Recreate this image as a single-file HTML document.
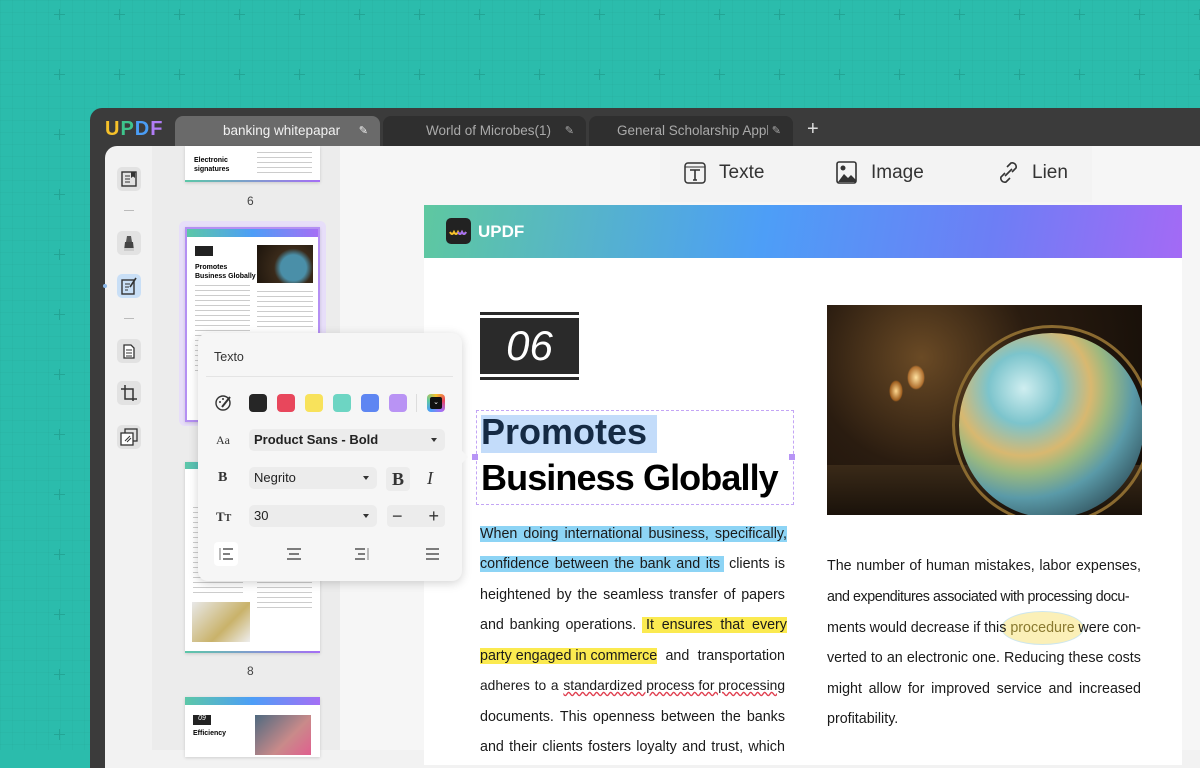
<!DOCTYPE html>
<html><head><meta charset="utf-8"><style>
*{box-sizing:border-box;margin:0;padding:0}
body{width:1200px;height:750px;overflow:hidden;position:relative;font-family:"Liberation Sans",sans-serif;background:#2bbcac}
.grid{position:absolute;inset:0;background-image:linear-gradient(rgba(0,0,0,.025) 1px,transparent 1px),linear-gradient(90deg,rgba(0,0,0,.025) 1px,transparent 1px);background-size:12px 12px}
.plus{position:absolute;width:11px;height:11px}
.plus:before,.plus:after{content:"";position:absolute;background:#23a595}
.plus:before{left:5px;top:0;width:1px;height:11px}
.plus:after{top:5px;left:0;height:1px;width:11px}
.win{position:absolute;left:90px;top:108px;width:1120px;height:660px;background:#3b3b3b;border-radius:12px 0 0 0}
.abs{position:absolute}
.tab{position:absolute;top:8px;height:38px;color:#aaa;font-size:13px;line-height:30px;border-radius:8px 8px 0 0}
.inner{position:absolute;left:15px;top:38px;right:0;bottom:0;background:#f2f2f2;border-radius:12px 0 0 0}
.ic{position:absolute;left:117px;width:24px;height:24px;border-radius:5px;background:#e2e2e2}
.thumb{position:absolute;left:185px;width:135px;background:#fff;box-shadow:0 1px 3px rgba(0,0,0,.15);overflow:hidden}
.line{position:absolute;font-size:14.3px;color:#1a1a1a;white-space:nowrap}
.lj{display:flex;justify-content:space-between}
.hl{background:#8dd4f5}
.hy{background:#fbea50}
.sw{width:18px;height:18px;border-radius:4px;display:inline-block}
.sel{background:#ececec;border-radius:5px;position:absolute;height:22px;font-size:13px;color:#222;line-height:22px;padding-left:5px}
.caret{position:absolute;right:8px;top:9px;border:3.5px solid transparent;border-top:4px solid #333}
.tl{background:repeating-linear-gradient(#ccc 0 1px,transparent 1px 5px)}
</style></head><body>
<div class="grid"></div>
<div class="plus" style="left:54px;top:9px"></div><div class="plus" style="left:114px;top:9px"></div><div class="plus" style="left:174px;top:9px"></div><div class="plus" style="left:234px;top:9px"></div><div class="plus" style="left:294px;top:9px"></div><div class="plus" style="left:354px;top:9px"></div><div class="plus" style="left:414px;top:9px"></div><div class="plus" style="left:474px;top:9px"></div><div class="plus" style="left:534px;top:9px"></div><div class="plus" style="left:594px;top:9px"></div><div class="plus" style="left:654px;top:9px"></div><div class="plus" style="left:714px;top:9px"></div><div class="plus" style="left:774px;top:9px"></div><div class="plus" style="left:834px;top:9px"></div><div class="plus" style="left:894px;top:9px"></div><div class="plus" style="left:954px;top:9px"></div><div class="plus" style="left:1014px;top:9px"></div><div class="plus" style="left:1074px;top:9px"></div><div class="plus" style="left:1134px;top:9px"></div><div class="plus" style="left:1194px;top:9px"></div>
<div class="plus" style="left:54px;top:69px"></div><div class="plus" style="left:114px;top:69px"></div><div class="plus" style="left:174px;top:69px"></div><div class="plus" style="left:234px;top:69px"></div><div class="plus" style="left:294px;top:69px"></div><div class="plus" style="left:354px;top:69px"></div><div class="plus" style="left:414px;top:69px"></div><div class="plus" style="left:474px;top:69px"></div><div class="plus" style="left:534px;top:69px"></div><div class="plus" style="left:594px;top:69px"></div><div class="plus" style="left:654px;top:69px"></div><div class="plus" style="left:714px;top:69px"></div><div class="plus" style="left:774px;top:69px"></div><div class="plus" style="left:834px;top:69px"></div><div class="plus" style="left:894px;top:69px"></div><div class="plus" style="left:954px;top:69px"></div><div class="plus" style="left:1014px;top:69px"></div><div class="plus" style="left:1074px;top:69px"></div><div class="plus" style="left:1134px;top:69px"></div><div class="plus" style="left:1194px;top:69px"></div>
<div class="plus" style="left:54px;top:129px"></div><div class="plus" style="left:54px;top:189px"></div><div class="plus" style="left:54px;top:249px"></div><div class="plus" style="left:54px;top:309px"></div><div class="plus" style="left:54px;top:369px"></div><div class="plus" style="left:54px;top:429px"></div><div class="plus" style="left:54px;top:489px"></div><div class="plus" style="left:54px;top:549px"></div><div class="plus" style="left:54px;top:609px"></div><div class="plus" style="left:54px;top:669px"></div><div class="plus" style="left:54px;top:729px"></div>

<div class="win">
 <div class="abs" style="left:15px;top:10px;font-size:20px;font-weight:bold;letter-spacing:1px"><span style="color:#f6c12a">U</span><span style="color:#3ec48c">P</span><span style="color:#4a9df5">D</span><span style="color:#b07cf5">F</span></div>
 <div class="tab" style="left:85px;width:205px;background:#6a6a6a;color:#f2f2f2;padding-left:48px;font-size:13.5px">banking whitepapar<span style="position:absolute;right:12px;font-size:11px">✎</span></div>
 <div class="tab" style="left:293px;width:203px;background:#2f2f2f;padding-left:43px;font-size:13.5px">World of Microbes(1)<span style="position:absolute;right:12px;font-size:11px">✎</span></div>
 <div class="tab" style="left:499px;width:204px;background:#2f2f2f;padding-left:28px;overflow:hidden;white-space:nowrap;font-size:13.5px">General Scholarship Applic<span style="position:absolute;right:0;padding:0 12px 0 4px;font-size:11px;background:#2f2f2f">✎</span></div>
 <div class="abs" style="left:717px;top:10px;color:#ddd;font-size:20px">+</div>
 <div class="inner"></div>
</div>
<div class="abs" style="left:152px;top:146px;width:188px;height:604px;background:#ececec"></div>
<div class="abs" style="left:340px;top:146px;width:860px;height:604px;background:#f6f6f6"></div>
<div class="ic" style="top:167px"><svg width="24" height="24"><rect x="5" y="5" width="14" height="14" fill="none" stroke="#333" stroke-width="1.4"/><path d="M8 9h5M8 12h5M8 15h5" stroke="#333"/><path d="M14 5v6l2-1.5 2 1.5V5" fill="#333"/></svg></div>
<div class="abs" style="left:124px;top:210px;width:10px;height:1px;background:#bbb"></div>
<div class="ic" style="top:231px"><svg width="24" height="24"><path d="M10 5h4l1 6h-6z" fill="#555"/><path d="M8 11h8l1 9H7z" fill="#444"/><rect x="7" y="17" width="10" height="3" fill="#ccc"/></svg></div>
<div class="ic" style="top:274px;background:#c9dff6"><svg width="24" height="24"><rect x="5" y="6" width="12" height="14" fill="none" stroke="#333" stroke-width="1.4"/><path d="M8 10h5M8 13h4M8 16h3" stroke="#333"/><path d="M19 4l-6 9" stroke="#333" stroke-width="1.6"/></svg></div>
<div class="abs" style="left:103px;top:284px;width:4px;height:4px;border-radius:2px;background:#8cb8e8"></div>
<div class="abs" style="left:124px;top:318px;width:10px;height:1px;background:#bbb"></div>
<div class="ic" style="top:339px"><svg width="24" height="24"><path d="M7 6h7l3 3v10H7z" fill="#fff" stroke="#333" stroke-width="1.3"/><path d="M9 11h6M9 14h6M9 17h6" stroke="#333"/></svg></div>
<div class="ic" style="top:381px"><svg width="24" height="24"><path d="M8 4v14h12M4 8h12v12" fill="none" stroke="#333" stroke-width="1.5"/></svg></div>
<div class="ic" style="top:425px"><svg width="24" height="24"><rect x="8" y="4" width="12" height="12" fill="none" stroke="#333" stroke-width="1.3"/><rect x="4" y="8" width="12" height="12" fill="#fff" stroke="#333" stroke-width="1.3"/><path d="M8 16l5-5M10 17l4-4" stroke="#333"/></svg></div>

<div class="thumb" style="top:146px;height:36px"><div style="position:absolute;left:9px;top:10px;font-size:7px;font-weight:bold;line-height:9px">Electronic<br>signatures</div><div class="tl" style="position:absolute;left:72px;top:6px;width:55px;height:22px"></div><div style="position:absolute;bottom:0;left:0;right:0;height:2px;background:linear-gradient(90deg,#5cc7a8,#a56ff5)"></div></div>
<div class="abs" style="left:247px;top:194px;font-size:12px;color:#444">6</div>
<div class="abs" style="left:179px;top:221px;width:147px;height:205px;border-radius:6px;background:#e7def9"></div>
<div class="thumb" style="top:227px;height:195px;border:2px solid #b48ff3">
 <div style="height:8px;background:linear-gradient(90deg,#5cc7a8,#4d9ef7,#a56ff5)"></div>
 <div style="position:absolute;left:8px;top:17px;width:18px;height:10px;background:#222"></div>
 <div style="position:absolute;left:8px;top:34px;font-size:7px;font-weight:bold;line-height:9px">Promotes<br>Business Globally</div>
 <div style="position:absolute;left:70px;top:16px;width:56px;height:38px;background:radial-gradient(circle at 65% 60%,#4a8fa8 0 30%,#3a2a1a 45%,#1c140c)"></div>
 <div class="tl" style="position:absolute;left:8px;top:56px;width:55px;height:90px"></div>
 <div class="tl" style="position:absolute;left:70px;top:62px;width:56px;height:40px"></div>
</div>
<div class="thumb" style="top:462px;height:191px">
 <div style="height:7px;background:linear-gradient(90deg,#5cc7a8,#4d9ef7,#a56ff5)"></div>
 <div class="tl" style="position:absolute;left:8px;top:45px;width:50px;height:90px"></div>
 <div class="tl" style="position:absolute;left:72px;top:110px;width:55px;height:40px"></div>
 <div style="position:absolute;left:7px;top:140px;width:58px;height:40px;background:linear-gradient(135deg,#e8e8e8,#c9b26a 60%,#eee)"></div>
 <div style="position:absolute;bottom:0;left:0;right:0;height:2px;background:linear-gradient(90deg,#5cc7a8,#a56ff5)"></div>
</div>
<div class="abs" style="left:247px;top:664px;font-size:12px;color:#444">8</div>
<div class="thumb" style="top:697px;height:60px">
 <div style="height:8px;background:linear-gradient(90deg,#5cc7a8,#4d9ef7,#a56ff5)"></div>
 <div style="position:absolute;left:8px;top:18px;width:18px;height:10px;background:#222;color:#fff;font-size:7px;font-style:italic;text-align:center">09</div>
 <div style="position:absolute;left:8px;top:33px;font-size:7px;font-weight:bold">Efficiency</div>
 <div style="position:absolute;left:70px;top:18px;width:56px;height:40px;background:linear-gradient(135deg,#4f6a80,#c98a8a 60%,#e05f8f)"></div>
</div>

<div class="abs" style="left:660px;top:146px;width:432px;height:56px;background:#f3f3f3"></div>
<svg class="abs" style="left:683px;top:160px" width="26" height="26"><rect x="2" y="3" width="20" height="20" rx="3" fill="none" stroke="#333" stroke-width="1.5"/><path d="M2 7h20" stroke="#333"/><path d="M7 10h10M12 10v10M10 20h4" stroke="#333" stroke-width="1.6"/></svg>
<div class="abs" style="left:719px;top:162px;font-size:19px;color:#333">Texte</div>
<svg class="abs" style="left:835px;top:160px" width="26" height="26"><rect x="2" y="2" width="19" height="21" rx="2" fill="none" stroke="#333" stroke-width="1.6"/><circle cx="8" cy="8" r="2.5" fill="#333"/><path d="M3 22l6-8 4 4 3-3 5 5v2H3z" fill="#333"/></svg>
<div class="abs" style="left:871px;top:162px;font-size:19px;color:#333">Image</div>
<svg class="abs" style="left:996px;top:160px" width="26" height="26"><path d="M11 7l4-4a4 4 0 015 5l-4 4M14 18l-4 4a4 4 0 01-5-5l4-4M9 16l7-7" fill="none" stroke="#333" stroke-width="1.6"/></svg>
<div class="abs" style="left:1032px;top:162px;font-size:19px;color:#333">Lien</div>

<div class="abs" style="left:424px;top:205px;width:758px;height:560px;background:#fff"></div>
<div class="abs" style="left:424px;top:205px;width:758px;height:53px;background:linear-gradient(100deg,#5ec8a0 0%,#4d9ef7 45%,#6d7ef5 75%,#a36af5 100%)"></div>
<div class="abs" style="left:446px;top:218px;width:25px;height:26px;border-radius:5px;background:#222"><svg width="25" height="26"><path d="M4 14q2 4 4 0q2 4 4 0q2 4 4 0q2 4 4 0" fill="none" stroke="#f6c12a" stroke-width="2"/><path d="M12 14q2 4 4 0q2 4 4 0" fill="none" stroke="#a56ff5" stroke-width="2"/></svg></div>
<div class="abs" style="left:478px;top:222px;font-size:17px;font-weight:bold;color:#fff">UPDF</div>

<div class="abs" style="left:480px;top:312px;width:99px;height:3px;background:#2a2a2a"></div>
<div class="abs" style="left:480px;top:318px;width:99px;height:56px;background:#2a2a2a;color:#fff;font-size:42px;font-style:italic;text-align:center;line-height:56px;font-weight:300">06</div>
<div class="abs" style="left:480px;top:377px;width:99px;height:3px;background:#2a2a2a"></div>

<div class="abs" style="left:476px;top:410px;width:318px;height:95px;border:1px dashed #c3a5f5"></div>
<div class="abs" style="left:472px;top:454px;width:6px;height:6px;background:#b794f6"></div>
<div class="abs" style="left:789px;top:454px;width:6px;height:6px;background:#b794f6"></div>
<div class="abs" style="left:481px;top:415px;width:176px;height:38px;background:#c3dcfa"></div>
<div class="abs" style="left:481px;top:411px;font-size:36px;font-weight:bold;color:#152a44;letter-spacing:0px">Promotes</div>
<div class="abs" style="left:481px;top:457px;font-size:36px;font-weight:bold;color:#000;letter-spacing:-0.9px">Business Globally</div>

<div class="line lj hl" style="left:480px;top:526px;width:307px"><span>When</span><span>doing</span><span>international</span><span>business,</span><span>specifically,</span></div>
<div class="line lj" style="left:480px;top:556px;width:305px"><span class="hl lj" style="width:244px"><span>confidence</span><span>between</span><span>the</span><span>bank</span><span>and</span><span>its&nbsp;</span></span><span>clients</span><span>is</span></div>
<div class="line lj" style="left:480px;top:587px;width:305px"><span>heightened</span><span>by</span><span>the</span><span>seamless</span><span>transfer</span><span>of</span><span>papers</span></div>
<div class="line lj" style="left:480px;top:617px;width:307px"><span>and</span><span>banking</span><span>operations.</span><span class="hy lj" style="width:145px"><span>&nbsp;It</span><span>ensures</span><span>that</span><span>every</span></span></div>
<div class="line lj" style="left:480px;top:648px;width:305px"><span class="hy">party engaged in commerce</span><span>and</span><span>transportation</span></div>
<div class="line lj" style="left:480px;top:678px;width:305px;font-size:13.8px"><span>adheres</span><span>to</span><span>a</span><span style="text-decoration:underline wavy #e04050">standardized process for processing</span></div>
<div class="line lj" style="left:480px;top:709px;width:305px"><span>documents.</span><span>This</span><span>openness</span><span>between</span><span>the</span><span>banks</span></div>
<div class="line lj" style="left:480px;top:739px;width:305px"><span>and</span><span>their</span><span>clients</span><span>fosters</span><span>loyalty</span><span>and</span><span>trust,</span><span>which</span></div>

<div class="abs" style="left:827px;top:305px;width:315px;height:210px;background:radial-gradient(circle at 30% 25%,#6a4a25 0,#2a1c10 40%,#120c07 100%);overflow:hidden">
 <div style="position:absolute;left:80px;top:60px;width:18px;height:25px;border-radius:50%;background:radial-gradient(#ffe2a0,#b07030 60%,transparent 70%)"></div>
 <div style="position:absolute;left:62px;top:75px;width:14px;height:22px;border-radius:50%;background:radial-gradient(#ffd890,#a06020 60%,transparent 70%)"></div>
 <div style="position:absolute;left:0;top:160px;width:315px;height:50px;background:linear-gradient(#3a2a18,#1a120a)"></div>
 <div style="position:absolute;left:125px;top:20px;width:200px;height:200px;border-radius:50%;border:3px solid #8a6a30"></div>
 <div style="position:absolute;left:132px;top:28px;width:185px;height:185px;border-radius:50%;background:radial-gradient(circle at 35% 30%,#cfeef0 0,#7cc4cc 20%,#d8b870 38%,#9ab880 48%,#5a9aa8 62%,#2d4a55 85%,#10202a 100%)"></div>
</div>

<div class="line lj" style="left:827px;top:558px;width:314px"><span>The</span><span>number</span><span>of</span><span>human</span><span>mistakes,</span><span>labor</span><span>expenses,</span></div>
<div class="line" style="left:827px;top:589px;width:314px;letter-spacing:-0.45px">and expenditures associated with processing docu-</div>
<div class="abs" style="left:1001px;top:611px;width:83px;height:34px;border-radius:50%;background:#fbf0b8;border:1px solid #cde6ee"></div>
<div class="line lj" style="left:827px;top:620px;width:314px"><span>ments</span><span>would</span><span>decrease</span><span>if</span><span>this&nbsp;<span style="color:#8a7a30">procedure</span></span><span>were</span><span>con-</span></div>
<div class="line lj" style="left:827px;top:650px;width:314px"><span>verted</span><span>to</span><span>an</span><span>electronic</span><span>one.</span><span>Reducing</span><span>these</span><span>costs</span></div>
<div class="line lj" style="left:827px;top:681px;width:314px"><span>might</span><span>allow</span><span>for</span><span>improved</span><span>service</span><span>and</span><span>increased</span></div>
<div class="line" style="left:827px;top:711px">profitability.</div>

<div class="abs" style="left:198px;top:333px;width:264px;height:248px;background:#f6f6f6;border-radius:10px;box-shadow:0 2px 10px rgba(0,0,0,.18)"></div>
<div class="abs" style="left:456px;top:452px;width:10px;height:10px;background:#f6f6f6;transform:rotate(45deg)"></div>
<div class="abs" style="left:214px;top:350px;font-size:12.5px;color:#333">Texto</div>
<div class="abs" style="left:206px;top:376px;width:247px;height:1px;background:#e4e4e4"></div>
<svg class="abs" style="left:215px;top:394px" width="18" height="18"><circle cx="8" cy="9" r="7" fill="none" stroke="#333" stroke-width="1.4"/><path d="M7 13l8-10" stroke="#333" stroke-width="2"/><circle cx="5" cy="8" r="1" fill="#333"/><circle cx="8" cy="5" r="1" fill="#333"/></svg>
<div class="abs" style="left:249px;top:394px;display:flex;gap:10px"><span class="sw" style="background:#262626"></span><span class="sw" style="background:#e8475c"></span><span class="sw" style="background:#f8e25b"></span><span class="sw" style="background:#6dd5c3"></span><span class="sw" style="background:#5e86f2"></span><span class="sw" style="background:#b993f4"></span></div>
<div class="abs" style="left:416px;top:394px;width:1px;height:18px;background:#ddd"></div>
<div class="abs" style="left:427px;top:394px;width:18px;height:18px;border-radius:4px;background:conic-gradient(#f6c12a,#e8475c,#a56ff5,#4d9ef7,#5ec8a0,#f6c12a);padding:3px"><div style="width:12px;height:12px;background:#111;border-radius:2px;color:#fff;font-size:7px;text-align:center;line-height:11px">⌄</div></div>
<div class="abs" style="left:216px;top:433px;font-size:12px;font-family:'Liberation Serif',serif;color:#333">Aa</div>
<div class="sel" style="left:249px;top:429px;width:196px;font-weight:bold">Product Sans - Bold<span class="caret"></span></div>
<div class="abs" style="left:218px;top:470px;font-size:14px;font-weight:bold;font-family:'Liberation Serif',serif;color:#333">B</div>
<div class="sel" style="left:249px;top:467px;width:128px">Negrito<span class="caret"></span></div>
<div class="abs" style="left:386px;top:467px;width:24px;height:24px;background:#ececec;border-radius:4px;font-size:18px;font-weight:bold;font-family:'Liberation Serif',serif;text-align:center;line-height:24px;color:#333">B</div>
<div class="abs" style="left:427px;top:468px;font-size:18px;font-style:italic;font-family:'Liberation Serif',serif;color:#333">I</div>
<div class="abs" style="left:216px;top:509px;font-size:13px;font-weight:bold;font-family:'Liberation Serif',serif;color:#333">T<span style="font-size:10px">T</span></div>
<div class="sel" style="left:249px;top:505px;width:128px">30<span class="caret"></span></div>
<div class="abs" style="left:387px;top:505px;width:58px;height:22px;background:#ececec;border-radius:4px;font-size:18px;color:#333;line-height:22px"><span style="position:absolute;left:5px">−</span><span style="position:absolute;right:6px">+</span></div>
<div class="abs" style="left:214px;top:542px;width:24px;height:24px;background:#fff;border-radius:4px"></div>
<svg class="abs" style="left:218px;top:546px" width="230" height="16"><path d="M2 2v12" stroke="#bbb" stroke-width="2"/><path d="M5 3h10M5 8h7M5 13h10" stroke="#333" stroke-width="1.2"/><path d="M69 3h14M71 8h10M69 13h14" stroke="#333" stroke-width="1.2"/><path d="M137 3h10M140 8h7M137 13h10" stroke="#333" stroke-width="1.2"/><path d="M150 2v12" stroke="#bbb" stroke-width="2"/><path d="M208 3h13M208 8h13M208 13h13" stroke="#333" stroke-width="1.2"/></svg>
</body></html>
